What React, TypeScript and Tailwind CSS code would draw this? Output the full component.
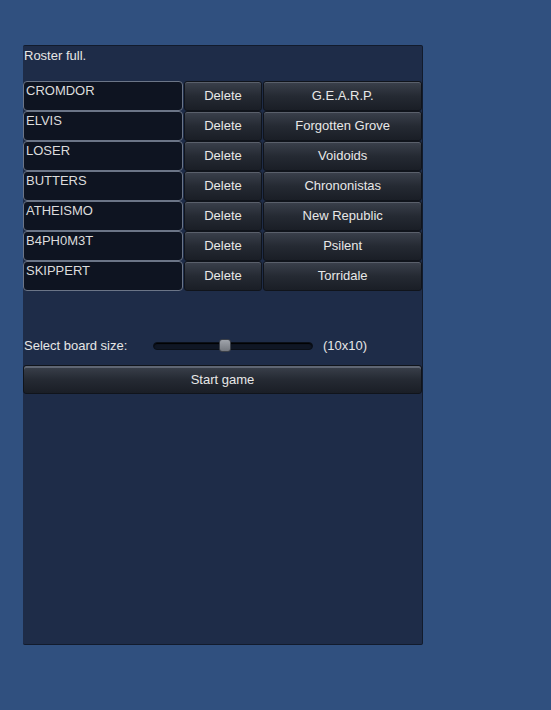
const roster = [
  { name: "CROMDOR", team: "G.E.A.R.P." },
  { name: "ELVIS", team: "Forgotten Grove" },
  { name: "LOSER", team: "Voidoids" },
  { name: "BUTTERS", team: "Chrononistas" },
  { name: "ATHEISMO", team: "New Republic" },
  { name: "B4PH0M3T", team: "Psilent" },
  { name: "SKIPPERT", team: "Torridale" },
]

const btn =
  "flex items-center justify-center rounded-[3px] border border-[#10141b] bg-gradient-to-b from-[#3b414c] via-[#252a33] to-[#1a1e26] shadow-[inset_0_1px_0_#5a606b] text-[#e8e8e8]"

export default function App() {
  return (
    <div className="min-h-[710px] w-full bg-[#30507f] pl-[23px] pt-[45px] font-['Liberation_Sans',Arial,sans-serif] text-[13px] text-[#e6e6e6]">
      <div className="flex h-[600px] w-[400px] flex-col rounded-[2px] border border-l-0 border-[#121b2c] bg-[#1e2c48]">
        <div className="h-[35px] pl-px pt-[2px] leading-[16px]">Roster full.</div>

        <div className="flex flex-col">
          {roster.map((r) => (
            <div key={r.name} className="flex h-[30px] gap-px">
              <div className="h-[30px] w-[160px] rounded-[4px] border border-[#6b7587] bg-[#0e1421] pl-[2px] pt-[1px] leading-[16px] text-[#dcdcdc]">
                {r.name}
              </div>
              <div className={`${btn} h-[30px] w-[79px]`}>Delete</div>
              <div className={`${btn} h-[30px] w-[159px]`}>{r.team}</div>
            </div>
          ))}
        </div>

        <div className="mt-[45px] flex h-[20px] items-center">
          <span className="w-[130px] pl-px">Select board size:</span>
          <div className="relative h-[8px] w-[160px] rounded-full border border-[#0a0f18] bg-[#0f1624] shadow-[inset_0_1px_1px_#000]">
            <div className="absolute left-[65px] top-[-4px] h-[13px] w-[12px] rounded-[3px] border border-[#3a3f48] bg-gradient-to-b from-[#a0a4ab] to-[#74787f]" />
          </div>
          <span className="ml-[10px]">(10x10)</span>
        </div>

        <div className={`${btn} mt-[9px] h-[29px] w-[399px] border-[#3b4656] shadow-[inset_0_2px_0_#5f6673]`}>
          Start game
        </div>
      </div>
    </div>
  )
}
